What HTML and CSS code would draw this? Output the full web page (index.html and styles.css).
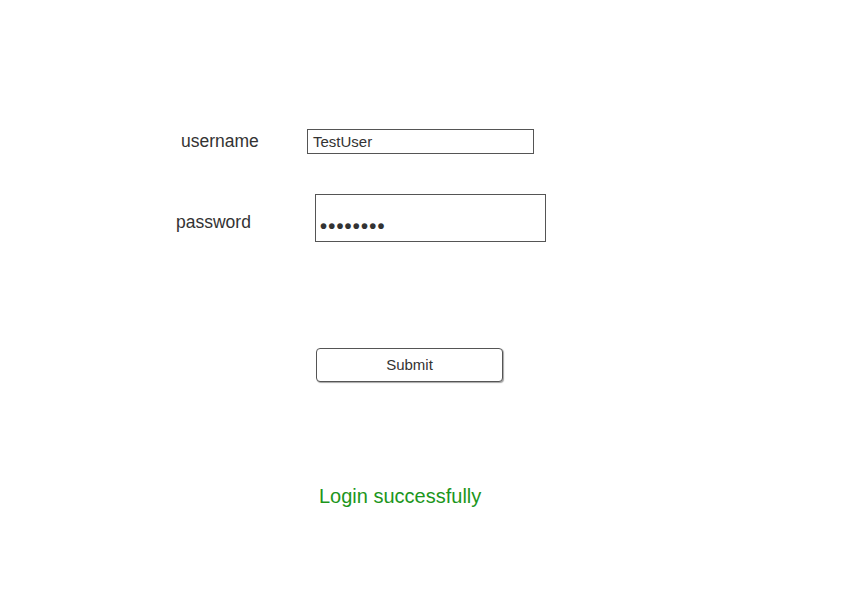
FILE: index.html
```html
<!DOCTYPE html>
<html>
<head>
<meta charset="utf-8">
<link rel="stylesheet" href="styles.css">
</head>
<body>
<div class="page">
  <div class="row row-user">
    <span class="label label-user">username</span>
    <div class="field field-user">TestUser</div>
  </div>
  <div class="row row-pass">
    <span class="label label-pass">password</span>
    <div class="field field-pass"><span class="dots">••••••••</span></div>
  </div>
  <div class="actions">
    <button class="submit">Submit</button>
  </div>
  <div class="message">Login successfully</div>
</div>
</body>
</html>
```
FILE: styles.css
```css
html, body {
  margin: 0;
  padding: 0;
  background: #ffffff;
}
body {
  width: 855px;
  height: 608px;
  overflow: hidden;
  font-family: "Liberation Sans", Arial, sans-serif;
  color: #333333;
}
.page {
  padding-top: 129px;
}
.row {
  display: flex;
  align-items: center;
}
.label {
  font-size: 17.5px;
  color: #333333;
}
.label-user {
  margin-left: 181px;
  width: 126px;
  margin-top: -1px;
}
.label-pass {
  margin-left: 176px;
  width: 139px;
  margin-top: 9px;
}
.field {
  box-sizing: border-box;
  border: 1px solid #555555;
  background: #ffffff;
}
.field-user {
  width: 227px;
  height: 25px;
  font-size: 15px;
  line-height: 23px;
  padding-left: 5px;
  color: #333333;
}
.row-pass {
  margin-top: 40px;
}
.field-pass {
  width: 231px;
  height: 48px;
  display: flex;
  align-items: flex-end;
  padding-left: 4px;
  padding-bottom: 7px;
}
.dots {
  font-size: 20px;
  letter-spacing: 1.2px;
  color: #333333;
  line-height: 16px;
  font-weight: bold;
}
.actions {
  margin-top: 106px;
  padding-left: 316px;
}
.submit {
  box-sizing: border-box;
  width: 187px;
  height: 34px;
  border: 1px solid #555555;
  border-radius: 4px;
  background: #ffffff;
  box-shadow: 1px 1px 1px rgba(0,0,0,0.35);
  font-family: "Liberation Sans", Arial, sans-serif;
  font-size: 15px;
  color: #333333;
  padding: 0 0 2px 0;
  display: block;
}
.message {
  margin-top: 103px;
  margin-left: 319px;
  font-size: 20px;
  color: #1c961c;
}
```
